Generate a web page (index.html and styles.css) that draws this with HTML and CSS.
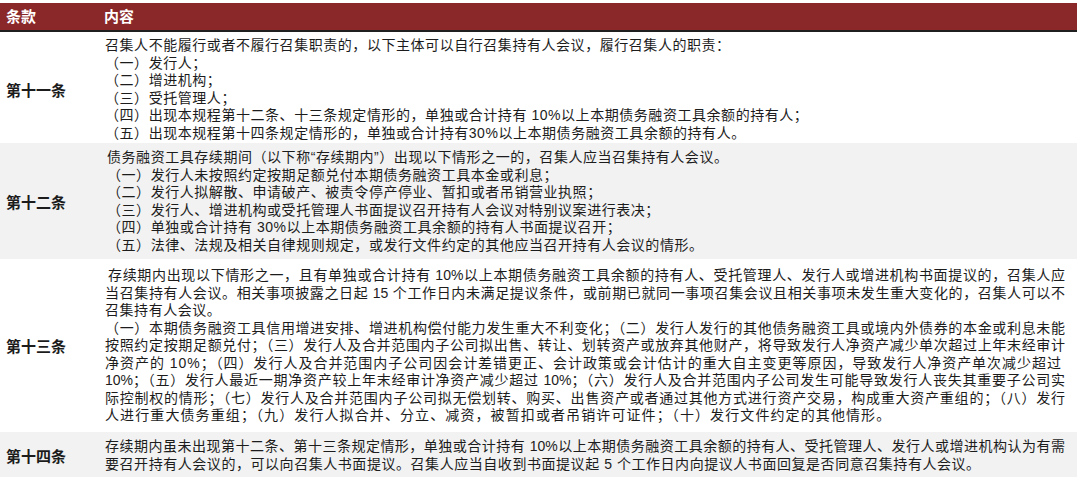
FILE: index.html
```html
<!DOCTYPE html>
<html lang="zh">
<head>
<meta charset="utf-8">
<title>条款</title>
<link rel="stylesheet" href="styles.css">
</head>
<body>
<div class="sheet">
  <div class="row head">
    <div class="label">条款</div>
    <div class="content">内容</div>
  </div>

  <div class="row r1">
    <div class="label">第十一条</div>
    <div class="content">
      <div class="ln">召集人不能履行或者不履行召集职责的，以下主体可以自行召集持有人会议，履行召集人的职责：</div>
      <div class="ln">（一）发行人；</div>
      <div class="ln">（二）增进机构；</div>
      <div class="ln">（三）受托管理人；</div>
      <div class="ln">（四）出现本规程第十二条、十三条规定情形的，单独或合计持有 10%以上本期债务融资工具余额的持有人；</div>
      <div class="ln">（五）出现本规程第十四条规定情形的，单独或合计持有30%以上本期债务融资工具余额的持有人。</div>
    </div>
  </div>

  <div class="row r2 alt">
    <div class="label">第十二条</div>
    <div class="content indent">
      <div class="ln">债务融资工具存续期间（以下称“存续期内”）出现以下情形之一的，召集人应当召集持有人会议。</div>
      <div class="ln">（一）发行人未按照约定按期足额兑付本期债务融资工具本金或利息；</div>
      <div class="ln">（二）发行人拟解散、申请破产、被责令停产停业、暂扣或者吊销营业执照；</div>
      <div class="ln">（三）发行人、增进机构或受托管理人书面提议召开持有人会议对特别议案进行表决；</div>
      <div class="ln">（四）单独或合计持有 30%以上本期债务融资工具余额的持有人书面提议召开；</div>
      <div class="ln">（五）法律、法规及相关自律规则规定，或发行文件约定的其他应当召开持有人会议的情形。</div>
    </div>
  </div>

  <div class="row r3">
    <div class="label">第十三条</div>
    <div class="content">
      <div class="ln full first">存续期内出现以下情形之一，且有单独或合计持有 10%以上本期债务融资工具余额的持有人、受托管理人、发行人或增进机构书面提议的，召集人应</div>
      <div class="ln full">当召集持有人会议。相关事项披露之日起 15 个工作日内未满足提议条件，或前期已就同一事项召集会议且相关事项未发生重大变化的，召集人可以不</div>
      <div class="ln">召集持有人会议。</div>
      <div class="ln full">（一）本期债务融资工具信用增进安排、增进机构偿付能力发生重大不利变化；（二）发行人发行的其他债务融资工具或境内外债券的本金或利息未能</div>
      <div class="ln full">按照约定按期足额兑付；（三）发行人及合并范围内子公司拟出售、转让、划转资产或放弃其他财产，将导致发行人净资产减少单次超过上年末经审计</div>
      <div class="ln wide">净资产的 10%；（四）发行人及合并范围内子公司因会计差错更正、会计政策或会计估计的重大自主变更等原因，导致发行人净资产单次减少超过</div>
      <div class="ln full">10%；（五）发行人最近一期净资产较上年末经审计净资产减少超过 10%；（六）发行人及合并范围内子公司发生可能导致发行人丧失其重要子公司实</div>
      <div class="ln full">际控制权的情形；（七）发行人及合并范围内子公司拟无偿划转、购买、出售资产或者通过其他方式进行资产交易，构成重大资产重组的；（八）发行</div>
      <div class="ln wider">人进行重大债务重组；（九）发行人拟合并、分立、减资，被暂扣或者吊销许可证件；（十）发行文件约定的其他情形。</div>
    </div>
  </div>

  <div class="row r4 alt">
    <div class="label">第十四条</div>
    <div class="content">
      <div class="ln full">存续期内虽未出现第十二条、第十三条规定情形，单独或合计持有 10%以上本期债务融资工具余额的持有人、受托管理人、发行人或增进机构认为有需</div>
      <div class="ln">要召开持有人会议的，可以向召集人书面提议。召集人应当自收到书面提议起 5 个工作日内向提议人书面回复是否同意召集持有人会议。</div>
    </div>
  </div>
</div>
</body>
</html>
```

FILE: styles.css
```css
* { box-sizing: border-box; }
html, body {
  margin: 0;
  padding: 0;
  background: #ffffff;
}
body {
  font-family: "Liberation Sans", "Noto Sans CJK SC", sans-serif;
  color: #1c1c1c;
}
.sheet {
  width: 1077px;
  padding-top: 3px;
}
.row {
  display: flex;
  align-items: center;
}
.label {
  width: 100px;
  flex: 0 0 100px;
  padding-left: 6px;
  font-size: 15px;
  font-weight: bold;
  letter-spacing: 0;
}
.content {
  flex: 1;
  padding-left: 5px;
  padding-right: 12px;
  font-size: 14px;
  line-height: 17.5px;
  letter-spacing: 0.55px;
}
.content.indent { padding-left: 7px; }
.ln { white-space: nowrap; }
.ln.full { text-align: justify; text-align-last: justify; letter-spacing: 0; }
.ln.first { padding-left: 3px; }
.ln.wide { letter-spacing: 0.97px; }
.ln.wider { letter-spacing: 1.1px; }

.head {
  height: 29px;
  background: #8a2829;
  color: #ffffff;
  border-bottom: 2px solid #1f1f1f;
}
.head .label, .head .content {
  font-size: 15px;
  font-weight: bold;
  letter-spacing: 0;
  line-height: 27px;
}
.head .content { padding-left: 4px; }

.alt { background: #f2f2f2; }
.r1 { padding: 5px 0 1px; }
.r2 { padding: 6px 0 5px; }
.r3 { padding: 8px 0 7.5px; }
.r4 { padding: 6px 0 4px; }
```
